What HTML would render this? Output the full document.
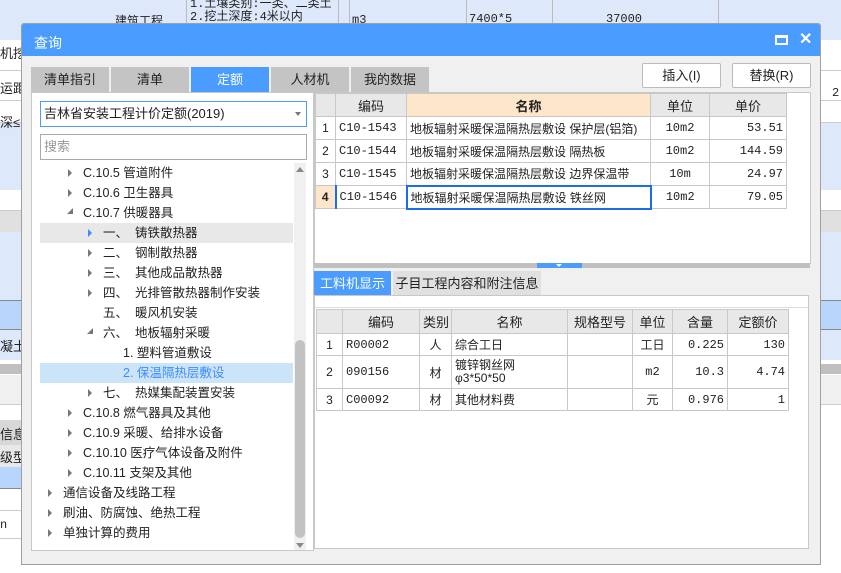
<!DOCTYPE html>
<html><head><meta charset="utf-8"><style>
*{box-sizing:border-box;margin:0;padding:0}
body{width:841px;height:573px;overflow:hidden;position:relative;background:#fff;font-family:"Liberation Sans","Noto Sans CJK SC",sans-serif;font-size:12px;color:#222}
.a{position:absolute}
.mono{font-family:"Liberation Mono","Noto Sans CJK SC",monospace;font-size:12px}
table{border-collapse:collapse;position:absolute;table-layout:fixed}
td{border:1px solid #c8c8c8;padding:0 3px;white-space:nowrap;overflow:hidden}
.h td{background:#e8e8e8;text-align:center;font-size:13px}
.r{text-align:right}.c{text-align:center}
.tri{position:absolute;width:0;height:0;border-left:4px solid #777;border-top:4px solid transparent;border-bottom:4px solid transparent}
.trd{position:absolute;width:0;height:0;border-right:6px solid #777;border-top:6px solid transparent}
.t{position:absolute;font-size:12.5px;line-height:20px;white-space:nowrap}
</style></head><body>
<div class="a" style="left:0;top:0;width:841px;height:40px;background:#dde9fb"></div>
<div class="a" style="left:338px;top:0;width:1px;height:40px;background:#bbb"></div>
<div class="a" style="left:186px;top:0;width:1px;height:40px;background:#bbb"></div>
<div class="a" style="left:349px;top:0;width:1px;height:40px;background:#bbb"></div>
<div class="a" style="left:466px;top:0;width:1px;height:40px;background:#bbb"></div>
<div class="a" style="left:552px;top:0;width:1px;height:40px;background:#bbb"></div>
<div class="a" style="left:718px;top:0;width:1px;height:40px;background:#bbb"></div>
<div class="a mono" style="left:190px;top:-2px;font-size:12px;line-height:13px">1.土壤类别:一类、二类土<br>2.挖土深度:4米以内</div>
<div class="a" style="left:115px;top:12px;font-size:12px">建筑工程</div>
<div class="a mono" style="left:352px;top:13px">m3</div>
<div class="a mono" style="left:469px;top:12px">7400*5</div>
<div class="a mono" style="left:606px;top:12px">37000</div>
<div class="a" style="left:0;top:40px;width:841px;height:82px;background:#fff"></div>
<div class="a" style="left:0;top:70px;width:841px;height:1px;background:#ccc"></div>
<div class="a" style="left:0;top:100px;width:841px;height:1px;background:#ccc"></div>
<div class="a" style="left:0;top:122px;width:841px;height:68px;background:#dde9fb;border-top:1px solid #ccc"></div>
<div class="a" style="left:0;top:210px;width:841px;height:22px;background:#e0e0e0;border-top:1px solid #ccc"></div>
<div class="a" style="left:0;top:232px;width:841px;height:68px;background:#dde9fb"></div>
<div class="a" style="left:0;top:300px;width:841px;height:30px;background:#b8d6fb;border-top:1px solid #888;border-bottom:1px solid #888"></div>
<div class="a" style="left:0;top:330px;width:841px;height:30px;background:#dde9fb"></div>
<div class="a" style="left:0;top:364px;width:841px;height:10px;background:#c0c0c0"></div>
<div class="a" style="left:0;top:375px;width:841px;height:30px;background:#f0f0f0;border-bottom:1px solid #ccc"></div>
<div class="a" style="left:0;top:420px;width:30px;height:25px;background:#d8d8d8"></div>
<div class="a" style="left:0;top:445px;width:30px;height:22px;background:#e8e8e8"></div>
<div class="a" style="left:0;top:467px;width:30px;height:22px;background:#b8d6fb;border-bottom:1px solid #888"></div>
<div class="a" style="left:0;top:510px;width:30px;height:1px;background:#ccc"></div>
<div class="a" style="left:0;top:538px;width:30px;height:1px;background:#ccc"></div>
<div class="a" style="left:0;top:43px;font-size:13px">机挖</div>
<div class="a" style="left:0;top:78px;font-size:13px">运距</div>
<div class="a" style="left:0;top:112px;font-size:13px">深≤</div>
<div class="a" style="left:0;top:336px;font-size:13px">凝土</div>
<div class="a" style="left:0;top:424px;font-size:13px">信息</div>
<div class="a" style="left:0;top:447px;font-size:13px">级型</div>
<div class="a mono" style="left:0;top:518px">n</div>
<div class="a mono" style="left:832px;top:86px">2</div>

<div class="a" style="left:21px;top:23px;width:800px;height:542px;background:#f0f0f0;border:1px solid #a0a0a0;border-radius:3px 3px 0 0"></div>
<div class="a" style="left:22px;top:24px;width:798px;height:32px;background:#4a9cff;border-radius:2px 2px 0 0"></div>
<div class="a" style="left:34px;top:33px;color:#fff;font-size:14px">查询</div>
<div class="a" style="left:775px;top:35px;width:13px;height:10px;border:2px solid #fff;border-top-width:3px"></div>
<div class="a" style="left:799px;top:29px;color:#fff;font-size:16px;font-weight:bold">✕</div>

<div class="a c" style="left:31px;top:67px;width:78px;height:25px;background:#c4c4c4;line-height:25px;font-size:13px">清单指引</div>
<div class="a c" style="left:111px;top:67px;width:78px;height:25px;background:#c4c4c4;line-height:25px;font-size:13px">清单</div>
<div class="a c" style="left:191px;top:67px;width:78px;height:25px;background:#4a9cff;color:#fff;line-height:25px;font-size:13px">定额</div>
<div class="a c" style="left:271px;top:67px;width:78px;height:25px;background:#c4c4c4;line-height:25px;font-size:13px">人材机</div>
<div class="a c" style="left:351px;top:67px;width:78px;height:25px;background:#c4c4c4;line-height:25px;font-size:13px">我的数据</div>
<div class="a c" style="left:642px;top:63px;width:79px;height:25px;background:#fff;border:1px solid #bbb;border-radius:2px;line-height:23px;font-size:13px">插入(I)</div>
<div class="a c" style="left:732px;top:63px;width:79px;height:25px;background:#fff;border:1px solid #bbb;border-radius:2px;line-height:23px;font-size:13px">替换(R)</div>

<div class="a" style="left:31px;top:92px;width:283px;height:459px;background:#fff;border:1px solid #c8c8c8"></div>
<div class="a" style="left:40px;top:101px;width:267px;height:26px;border:1px solid #4a9cff;line-height:24px;padding-left:3px;font-size:13px">吉林省安装工程计价定额(2019)</div>
<div class="a" style="left:295px;top:112px;border-top:4px solid #777;border-left:3px solid transparent;border-right:3px solid transparent"></div>
<div class="a" style="left:40px;top:134px;width:267px;height:26px;border:1px solid #aaa;line-height:24px;padding-left:3px;color:#999;font-size:13px">搜索</div>
<div class="a" style="left:294px;top:163px;width:12px;height:387px;background:#f0f0f0"></div>
<div class="a" style="left:295px;top:340px;width:10px;height:198px;background:#c2c2c2;border-radius:5px"></div>
<div class="a" style="left:296px;top:167px;border-bottom:5px solid #888;border-left:4px solid transparent;border-right:4px solid transparent"></div>
<div class="a" style="left:296px;top:543px;border-top:5px solid #888;border-left:4px solid transparent;border-right:4px solid transparent"></div>
<div class="a" style="left:40px;top:223px;width:253px;height:20px;background:#e8e8e8"></div>
<div class="a" style="left:40px;top:363px;width:253px;height:20px;background:#cce4f7"></div>

<div class="tri" style="left:68px;top:169px"></div><div class="t" style="left:83px;top:163px">C.10.5 管道附件</div>
<div class="tri" style="left:68px;top:189px"></div><div class="t" style="left:83px;top:183px">C.10.6 卫生器具</div>
<div class="trd" style="left:67px;top:208px"></div><div class="t" style="left:83px;top:203px">C.10.7 供暖器具</div>
<div class="tri" style="left:88px;top:229px;border-left-color:#3c8cff"></div><div class="t" style="left:103px;top:223px">一、&nbsp;&nbsp;铸铁散热器</div>
<div class="tri" style="left:88px;top:249px"></div><div class="t" style="left:103px;top:243px">二、&nbsp;&nbsp;钢制散热器</div>
<div class="tri" style="left:88px;top:269px"></div><div class="t" style="left:103px;top:263px">三、&nbsp;&nbsp;其他成品散热器</div>
<div class="tri" style="left:88px;top:289px"></div><div class="t" style="left:103px;top:283px">四、&nbsp;&nbsp;光排管散热器制作安装</div>
<div class="t" style="left:103px;top:303px">五、&nbsp;&nbsp;暖风机安装</div>
<div class="trd" style="left:87px;top:328px"></div><div class="t" style="left:103px;top:323px">六、&nbsp;&nbsp;地板辐射采暖</div>
<div class="t" style="left:123px;top:343px">1. 塑料管道敷设</div>
<div class="t" style="left:123px;top:363px;color:#3c8cff">2. 保温隔热层敷设</div>
<div class="tri" style="left:88px;top:389px"></div><div class="t" style="left:103px;top:383px">七、&nbsp;&nbsp;热媒集配装置安装</div>
<div class="tri" style="left:68px;top:409px"></div><div class="t" style="left:83px;top:403px">C.10.8 燃气器具及其他</div>
<div class="tri" style="left:68px;top:429px"></div><div class="t" style="left:83px;top:423px">C.10.9 采暖、给排水设备</div>
<div class="tri" style="left:68px;top:449px"></div><div class="t" style="left:83px;top:443px">C.10.10 医疗气体设备及附件</div>
<div class="tri" style="left:68px;top:469px"></div><div class="t" style="left:83px;top:463px">C.10.11 支架及其他</div>
<div class="tri" style="left:48px;top:489px"></div><div class="t" style="left:63px;top:483px">通信设备及线路工程</div>
<div class="tri" style="left:48px;top:509px"></div><div class="t" style="left:63px;top:503px">刷油、防腐蚀、绝热工程</div>
<div class="tri" style="left:48px;top:529px"></div><div class="t" style="left:63px;top:523px">单独计算的费用</div>

<div class="a" style="left:314px;top:92px;width:497px;height:172px;background:#fff;border:1px solid #c8c8c8"></div>
<table style="left:315px;top:93px;width:471px">
<colgroup><col style="width:20px"><col style="width:71px"><col style="width:244px"><col style="width:59px"><col style="width:77px"></colgroup>
<tr class="h" style="height:23px"><td></td><td>编码</td><td style="background:#fde6c9;font-weight:bold">名称</td><td>单位</td><td>单价</td></tr>
<tr style="height:23px"><td class="c" style="background:#fff">1</td><td class="mono">C10-1543</td><td style="border-top:1px solid #4a9cff">地板辐射采暖保温隔热层敷设 保护层(铝箔)</td><td class="c mono">10m2</td><td class="r mono">53.51</td></tr>
<tr style="height:23px"><td class="c">2</td><td class="mono">C10-1544</td><td>地板辐射采暖保温隔热层敷设 隔热板</td><td class="c mono">10m2</td><td class="r mono">144.59</td></tr>
<tr style="height:23px"><td class="c">3</td><td class="mono">C10-1545</td><td>地板辐射采暖保温隔热层敷设 边界保温带</td><td class="c mono">10m</td><td class="r mono">24.97</td></tr>
<tr style="height:23px"><td class="c" style="background:#fde6c9;font-weight:bold">4</td><td class="mono" style="border-left:2px solid #1a6fe6">C10-1546</td><td style="border:2px solid #1a6fe6">地板辐射采暖保温隔热层敷设 铁丝网</td><td class="c mono">10m2</td><td class="r mono">79.05</td></tr>
</table>
<div class="a" style="left:314px;top:263px;width:496px;height:5px;background:#c0c0c0"></div>
<div class="a" style="left:537px;top:263px;width:45px;height:5px;background:#4a9cff"></div>
<div class="a" style="left:556px;top:264px;border-top:3px solid #fff;border-left:3px solid transparent;border-right:3px solid transparent"></div>

<div class="a c" style="left:314px;top:271px;width:77px;height:25px;background:#4a9cff;color:#fff;line-height:25px;font-size:13px">工料机显示</div>
<div class="a c" style="left:393px;top:271px;width:148px;height:25px;background:#e0e0e0;line-height:25px;font-size:13px">子目工程内容和附注信息</div>
<div class="a" style="left:314px;top:295px;width:495px;height:254px;background:#fff;border:1px solid #c8c8c8"></div>
<div class="a" style="left:315px;top:296px;width:493px;height:12px;border-bottom:1px solid #ddd"></div>
<table style="left:316px;top:309px;width:472px">
<colgroup><col style="width:26px"><col style="width:77px"><col style="width:32px"><col style="width:116px"><col style="width:65px"><col style="width:40px"><col style="width:55px"><col style="width:61px"></colgroup>
<tr class="h" style="height:24px"><td></td><td>编码</td><td>类别</td><td>名称</td><td>规格型号</td><td>单位</td><td>含量</td><td>定额价</td></tr>
<tr style="height:22px"><td class="c">1</td><td class="mono">R00002</td><td class="c">人</td><td>综合工日</td><td></td><td class="c">工日</td><td class="r mono">0.225</td><td class="r mono">130</td></tr>
<tr style="height:33px"><td class="c">2</td><td class="mono">090156</td><td class="c">材</td><td style="line-height:13px">镀锌钢丝网<br>φ3*50*50</td><td></td><td class="c mono">m2</td><td class="r mono">10.3</td><td class="r mono">4.74</td></tr>
<tr style="height:22px"><td class="c">3</td><td class="mono">C00092</td><td class="c">材</td><td>其他材料费</td><td></td><td class="c">元</td><td class="r mono">0.976</td><td class="r mono">1</td></tr>
</table>
</body></html>
